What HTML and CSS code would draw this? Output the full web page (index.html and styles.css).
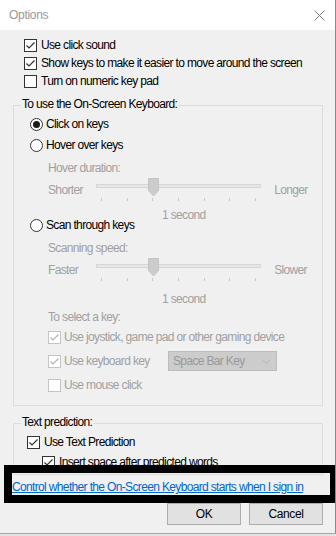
FILE: index.html
```html
<html>
  <head>
    <title>Options</title>
    <link rel="stylesheet" href="styles.css">
  </head>
  <body>
    <div class="window">
      <div class="titlebar">
        <span class="title">Options</span>
        <svg class="close" width="11" height="11" viewBox="0 0 11 11">
          <path d="M0.5 0.5 L10.5 10.5 M10.5 0.5 L0.5 10.5" stroke="#808080" stroke-width="1" fill="none"/>
        </svg>
      </div>

      <div class="content">
        <div class="checks">
          <div class="row">
            <span class="box"><svg width="11" height="11" viewBox="0 0 11 11"><path d="M1.5 5.5 L4 8 L9.5 2.5" stroke="#333" stroke-width="1.2" fill="none"/></svg></span>
            <span>Use click sound</span>
          </div>
          <div class="row">
            <span class="box"><svg width="11" height="11" viewBox="0 0 11 11"><path d="M1.5 5.5 L4 8 L9.5 2.5" stroke="#333" stroke-width="1.2" fill="none"/></svg></span>
            <span>Show keys to make it easier to move around the screen</span>
          </div>
          <div class="row">
            <span class="box"></span>
            <span>Turn on numeric key pad</span>
          </div>
        </div>

        <div class="group keyboard">
          <div class="legend">To use the On-Screen Keyboard:</div>
          <div class="row radio-row click">
            <span class="radio on"><span class="dot"></span></span>
            <span>Click on keys</span>
          </div>
          <div class="row radio-row hover">
            <span class="radio"></span>
            <span>Hover over keys</span>
          </div>

          <div class="sub">
            <div class="caption">Hover duration:</div>
            <div class="slider">
              <span class="end">Shorter</span>
              <div class="track-area">
                <div class="track"></div>
                <div class="ticks"><i></i><i></i><i></i><i></i><i></i><i></i><i></i></div>
                <svg class="thumb" width="11" height="19" viewBox="0 0 11 19">
                  <polygon points="0.5,0.5 10.5,0.5 10.5,12.5 5.5,18 0.5,12.5" fill="#cccccc" stroke="#c4c4c4"/>
                </svg>
              </div>
              <span class="end right">Longer</span>
            </div>
            <div class="value">1 second</div>
          </div>

          <div class="row radio-row scan">
            <span class="radio"></span>
            <span>Scan through keys</span>
          </div>

          <div class="sub">
            <div class="caption speed">Scanning speed:</div>
            <div class="slider">
              <span class="end">Faster</span>
              <div class="track-area">
                <div class="track"></div>
                <div class="ticks"><i></i><i></i><i></i><i></i><i></i><i></i><i></i></div>
                <svg class="thumb" width="11" height="19" viewBox="0 0 11 19">
                  <polygon points="0.5,0.5 10.5,0.5 10.5,12.5 5.5,18 0.5,12.5" fill="#cccccc" stroke="#c4c4c4"/>
                </svg>
              </div>
              <span class="end right">Slower</span>
            </div>
            <div class="value second">1 second</div>
            <div class="caption select">To select a key:</div>

            <div class="row disabled joystick">
              <span class="box"><svg width="11" height="11" viewBox="0 0 11 11"><path d="M1.5 5.5 L4 8 L9.5 2.5" stroke="#b4b4b4" stroke-width="1.2" fill="none"/></svg></span>
              <span>Use joystick, game pad or other gaming device</span>
            </div>
            <div class="row disabled keyrow">
              <span class="box"><svg width="11" height="11" viewBox="0 0 11 11"><path d="M1.5 5.5 L4 8 L9.5 2.5" stroke="#b4b4b4" stroke-width="1.2" fill="none"/></svg></span>
              <span class="keylabel">Use keyboard key</span>
              <div class="select-box">
                <span>Space Bar Key</span>
                <svg width="9" height="5" viewBox="0 0 9 5"><path d="M0.5 0.5 L4.5 4.5 L8.5 0.5" stroke="#b8b8b8" fill="none"/></svg>
              </div>
            </div>
            <div class="row disabled mouse">
              <span class="box"></span>
              <span>Use mouse click</span>
            </div>
          </div>
        </div>

        <div class="group prediction">
          <div class="legend">Text prediction:</div>
          <div class="row use-pred">
            <span class="box"><svg width="11" height="11" viewBox="0 0 11 11"><path d="M1.5 5.5 L4 8 L9.5 2.5" stroke="#333" stroke-width="1.2" fill="none"/></svg></span>
            <span>Use Text Prediction</span>
          </div>
          <div class="row insert">
            <span class="box"><svg width="11" height="11" viewBox="0 0 11 11"><path d="M1.5 5.5 L4 8 L9.5 2.5" stroke="#333" stroke-width="1.2" fill="none"/></svg></span>
            <span>Insert space after predicted words</span>
          </div>
        </div>

        <div class="link-row">
          <a href="#">Control whether the On-Screen Keyboard starts when I sign in</a>
        </div>

        <div class="buttons">
          <button>OK</button>
          <button>Cancel</button>
        </div>
      </div>

      <div class="highlight"></div>
    </div>
  </body>
</html>
```

FILE: styles.css
```css
body {
  background: #e4e4e4;
  color: #000000;
  font-family: "Liberation Sans", Arial, sans-serif;
  font-size: 12px;
  letter-spacing: -0.65px;
  margin: 0;
  overflow: hidden;
}

.window {
  background: #f0f0f0;
  border-bottom: 1px solid #a8a8a8;
  border-right: 1px solid #8a8a8a;
  height: 533px;
  overflow: hidden;
  position: relative;
  width: 335px;
}

.titlebar {
  align-items: center;
  background: #ffffff;
  display: flex;
  height: 30px;
  justify-content: space-between;
  padding: 0 10px 0 9px;
}

.title {
  color: #999999;
  letter-spacing: -0.3px;
}

.close {
  display: block;
}

.content {
  padding-top: 6px;
}

.row {
  align-items: center;
  display: flex;
  gap: 4px;
  height: 18px;
  line-height: 16px;
  white-space: nowrap;
}

.checks .row {
  padding-left: 24px;
}

.box {
  background: #ffffff;
  border: 1px solid #333333;
  display: block;
  flex: none;
  height: 11px;
  width: 11px;
}

.box svg {
  display: block;
}

.radio {
  align-items: center;
  background: #ffffff;
  border: 1px solid #333333;
  border-radius: 50%;
  display: flex;
  flex: none;
  height: 11px;
  justify-content: center;
  width: 11px;
}

.radio .dot {
  background: #1a1a1a;
  border-radius: 50%;
  height: 7px;
  width: 7px;
}

.group {
  border: 1px solid #dcdcdc;
  margin: 0 12px 0 13px;
}

.legend {
  background: #f0f0f0;
  display: table;
  line-height: 16px;
  margin: -10px 0 0 7px;
  padding: 0 1px;
}

.keyboard {
  margin-top: 15px;
  padding-bottom: 11px;
}

.radio-row {
  gap: 3px;
  padding-left: 16px;
}

.click,
.hover {
  margin-top: 3px;
}

.scan {
  margin-top: -7px;
}

.sub {
  color: #a0a0a0;
  padding-left: 34px;
}

.caption {
  line-height: 16px;
  margin-top: 6px;
}

.slider {
  align-items: flex-start;
  display: flex;
  height: 24px;
  margin-top: 2px;
}

.end {
  line-height: 16px;
  margin-top: 4px;
  width: 48px;
}

.end.right {
  margin-left: 13px;
}

.track-area {
  height: 24px;
  padding: 0 5px;
  position: relative;
  width: 156px;
}

.track {
  background: #e7e7e7;
  border: 1px solid #d6d6d6;
  height: 2px;
  margin: 6px -5px 0;
}

.ticks {
  display: flex;
  justify-content: space-between;
  margin-top: 10px;
}

.ticks i {
  background: #c8c8c8;
  height: 3px;
  width: 1px;
}

.thumb {
  left: 52px;
  position: absolute;
  top: 0;
}

.value {
  line-height: 16px;
  margin-top: 5px;
  padding-left: 114px;
}

.value.second {
  margin-top: 9px;
}

.caption.select {
  margin-top: 2px;
}

.disabled {
  gap: 3px;
}

.disabled .box {
  border-color: #c4c4c4;
}

.joystick {
  margin-top: 3px;
}

.keyrow {
  height: 20px;
  margin-top: 5px;
}

.mouse {
  margin-top: 5px;
}

.keylabel {
  width: 101px;
}

.select-box {
  align-items: center;
  background: #cccccc;
  border: 1px solid #bcbcbc;
  box-sizing: border-box;
  color: #999999;
  display: flex;
  height: 20px;
  justify-content: space-between;
  padding: 0 5px 0 4px;
  width: 109px;
}

.select-box svg {
  display: block;
}

.prediction {
  margin-top: 17px;
  padding-bottom: 3px;
}

.use-pred {
  margin-top: 3px;
  padding-left: 13px;
}

.insert {
  margin-top: 2px;
  padding-left: 28px;
}

.link-row {
  line-height: 16px;
  margin-top: 4px;
  padding-left: 12px;
  white-space: nowrap;
}

.link-row a {
  color: #0066cc;
}

.buttons {
  display: flex;
  gap: 8px;
  justify-content: flex-end;
  margin-top: 8px;
  padding-right: 12px;
}

.buttons button {
  background: #e1e1e1;
  border: 1px solid #adadad;
  color: #000000;
  font-family: inherit;
  font-size: 12px;
  height: 22px;
  letter-spacing: -0.4px;
  padding: 0;
  width: 74px;
}

.highlight {
  border: 8px solid #000000;
  box-sizing: border-box;
  height: 38px;
  left: 4px;
  position: absolute;
  top: 465px;
  width: 334px;
}
```
